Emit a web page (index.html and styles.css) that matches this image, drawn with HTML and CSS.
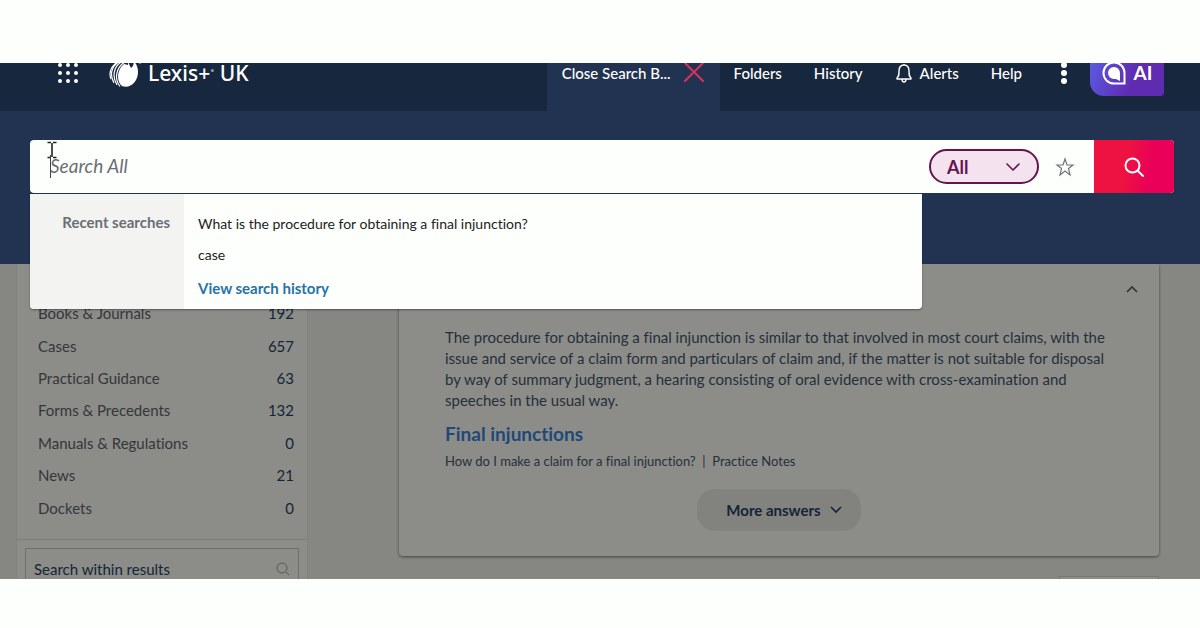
FILE: index.html
```html
<!DOCTYPE html>
<html lang="en">
<head>
  <meta charset="UTF-8" />
  <meta name="viewport" content="width=device-width, initial-scale=1.0"/>
  <title>Lexis+ UK</title>
  <link rel="stylesheet" href="styles.css">
</head>
<body>

  <div class="app">

    <!-- Top bar -->
    <header class="topbar">
      <button class="icon-btn apps-btn" aria-label="Apps">
        <svg width="22" height="22" viewBox="0 0 22 22" fill="#fff">
          <circle cx="3" cy="3" r="2"/><circle cx="11" cy="3" r="2"/><circle cx="19" cy="3" r="2"/>
          <circle cx="3" cy="11" r="2"/><circle cx="11" cy="11" r="2"/><circle cx="19" cy="11" r="2"/>
          <circle cx="3" cy="19" r="2"/><circle cx="11" cy="19" r="2"/><circle cx="19" cy="19" r="2"/>
        </svg>
      </button>
      <a class="brand" href="#">
        <svg width="32" height="30" viewBox="0 0 32 30" fill="none">
          <path d="M15 6C8 11 7 24 13 28C21 31 29 24 29 14C29 9 27 5 25 4L24 8L22 10L19 4L19 7Z" fill="#fff"/>
          <g stroke="#fff" stroke-width="1.200">
            <path d="M16 4C7 9 5 21 11 28.500"/>
            <path d="M14 3C4 8 3 19 8 27"/>
            <path d="M11 3C1 9 1 18 5 25"/>
            <path d="M7 5C0 11 0 16 2 21"/>
          </g>
          <circle cx="31" cy="5" r="1" fill="#8fa3b5"/>
        </svg>
        <span class="brand-name">Lexis+<sup>&bull;</sup> UK</span>
      </a>
      <nav class="menu">
        <a class="tab" href="#">Close Search B...
          <svg width="22" height="22" viewBox="0 0 22 22" stroke="#dc3158" stroke-width="2" stroke-linecap="round"><path d="M2 1L20 19M20 1L2 19"/></svg>
        </a>
        <a class="link" href="#">Folders</a>
        <a class="link" href="#">History</a>
        <a class="link" href="#">
          <svg width="18" height="20" viewBox="0 0 18 20" fill="none" stroke="#fff" stroke-width="1.400" stroke-linejoin="round"><path d="M9 2V1M2 15C4 13 4 12 4 8C4 4 6 2 9 2S14 4 14 8C14 12 14 13 16 15V16H2Z"/><path d="M7 16C7 20 11 20 11 16"/></svg>
          Alerts
        </a>
        <a class="link" href="#">Help</a>
      </nav>
      <button class="icon-btn more-btn" aria-label="More">
        <svg width="6" height="22" viewBox="0 0 6 22" fill="#fff"><circle cx="3" cy="3" r="3"/><circle cx="3" cy="11" r="3"/><circle cx="3" cy="19" r="3"/></svg>
      </button>
      <button class="ai-btn">
        <svg width="24" height="24" viewBox="0 0 24 24" fill="none">
          <path d="M12 1.500A10.500 10.500 0 1 0 12 22.500H22.500V12A10.500 10.500 0 0 0 12 1.500Z" stroke="#fff" stroke-width="2"/>
          <path d="M12 6A6 6 0 1 0 12 18H14L18 20V12A6 6 0 0 0 12 6Z" fill="#fff"/>
        </svg>
        AI
      </button>
    </header>

    <!-- Search -->
    <section class="search-area">
      <form class="search-bar">
        <input class="search-input" type="text" placeholder="Search All" aria-label="Search All">
        <div class="scope">
          <select class="scope-select" aria-label="Search scope">
            <option>All</option>
          </select>
          <svg class="scope-arrow" width="16" height="10" viewBox="0 0 16 10" fill="none" stroke="#641450" stroke-width="1.600" stroke-linecap="round" stroke-linejoin="round"><path d="M2 2L8 8L14 2"/></svg>
        </div>
        <button class="star-btn" type="button" aria-label="Favourite">
          <svg width="20" height="20" viewBox="0 0 20 20" fill="none" stroke="#6f7378" stroke-width="1.200"><path d="M10 2L12 8H18L13.500 11.500L15 18L10 14L5 18L6.500 11.500L2 8H8Z"/></svg>
        </button>
        <button class="search-btn" type="button" aria-label="Search">
          <svg width="22" height="22" viewBox="0 0 22 22" fill="none" stroke="#fff" stroke-width="2" stroke-linecap="round"><circle cx="9.500" cy="9.500" r="7"/><path d="M15 15L20 20"/></svg>
        </button>
        <!-- Text caret and mouse pointer -->
        <svg class="pointer" width="12" height="38" viewBox="0 0 12 38" fill="none">
          <path d="M1.500 1.500H5M7 1.500H10.500M6 2V16M1.500 16.500H5M7 16.500H10.500" stroke="#222" stroke-width="1.600"/>
          <path d="M4.500 14V37" stroke="#444"/>
        </svg>
        <div class="suggest">
          <div class="suggest-title">Recent searches</div>
          <div class="suggest-list">
            <a href="#">What is the procedure for obtaining a final injunction?</a>
            <a href="#">case</a>
            <a class="view-history" href="#">View search history</a>
          </div>
        </div>
      </form>
    </section>

    <!-- Results -->
    <main class="content">
      <aside class="sidebar">
        <nav class="categories">
          <a href="#"><span>Books &amp; Journals</span><span class="count">192</span></a>
          <a href="#"><span>Cases</span><span class="count">657</span></a>
          <a href="#"><span>Practical Guidance</span><span class="count">63</span></a>
          <a href="#"><span>Forms &amp; Precedents</span><span class="count">132</span></a>
          <a href="#"><span>Manuals &amp; Regulations</span><span class="count">0</span></a>
          <a href="#"><span>News</span><span class="count">21</span></a>
          <a href="#"><span>Dockets</span><span class="count">0</span></a>
        </nav>
        <div class="within">
          <input class="within-input" type="text" placeholder="Search within results" aria-label="Search within results">
          <svg width="14" height="14" viewBox="0 0 14 14" fill="none" stroke="#555" stroke-width="1"><circle cx="6" cy="6" r="5"/><path d="M10 10L13 13"/></svg>
        </div>
      </aside>

      <div class="results">
        <article class="answer">
          <button class="icon-btn collapse-btn" aria-label="Collapse">
            <svg width="12" height="8" viewBox="0 0 12 8" fill="none" stroke="#333" stroke-width="1.600"><path d="M1 7L6 2L11 7"/></svg>
          </button>
          <p class="answer-text">The procedure for obtaining a final injunction is similar to that involved in most court claims, with the issue and service of a claim form and particulars of claim and, if the matter is not suitable for disposal by way of summary judgment, a hearing consisting of oral evidence with cross-examination and speeches in the usual way.</p>
          <h2 class="answer-title"><a href="#">Final injunctions</a></h2>
          <p class="answer-source">How do I make a claim for a final injunction?&nbsp; |&nbsp; Practice Notes</p>
          <button class="more-answers">More answers
            <svg width="12" height="8" viewBox="0 0 12 8" fill="none" stroke="#142537" stroke-width="1.600"><path d="M1 1L6 6L11 1"/></svg>
          </button>
        </article>
        <div class="sort-box"></div>
      </div>
    </main>

  </div>

</body>
</html>
```
FILE: styles.css
```css
* {
  box-sizing: border-box;
  margin: 0;
  padding: 0;
}

body {
  display: flex;
  flex-direction: column;
  height: 100vh;
  padding: 63px 0 49px;
  font-family: Lato, sans-serif;
  font-size: 15px;
  font-variant-ligatures: none;
  background: #fdfffd;
  color: #142537;
}

a {
  color: inherit;
  text-decoration: none;
}

button, input, select {
  font-family: inherit;
  font-variant-ligatures: none;
  border: none;
  background: none;
}

button {
  cursor: pointer;
}

svg {
  display: block;
  flex-shrink: 0;
}

.app {
  display: flex;
  flex-direction: column;
  flex: 1;
  min-height: 0;
  overflow: hidden;
  background: #868683;
}

/* Top bar */
.topbar {
  display: flex;
  align-items: center;
  flex-shrink: 0;
  height: 76px;
  margin-top: -28px;
  padding: 0 36px 0 57px;
  background: #17283e;
  color: #fff;
}

.brand {
  display: flex;
  align-items: center;
  gap: 7px;
  margin-left: 30px;
}

.brand-name {
  font-family: "Noto Sans", sans-serif;
  font-size: 21px;
  font-weight: 500;
  line-height: 20px;
}

.brand-name sup {
  font-size: 11px;
  line-height: 1;
  vertical-align: 6px;
  color: #8fa3b5;
}

.menu {
  display: flex;
  align-items: center;
  align-self: stretch;
  margin-left: auto;
  font-weight: 500;
}

.tab {
  display: flex;
  align-items: center;
  align-self: stretch;
  gap: 12px;
  padding: 0 15px;
  background: #213351;
}

.link {
  display: flex;
  align-items: center;
  gap: 7px;
  padding: 0 14px;
}

.link + .link {
  margin-left: 4px;
}

.more-btn {
  margin: 0 23px 0 25px;
}

.ai-btn {
  display: flex;
  align-items: center;
  justify-content: center;
  gap: 8px;
  width: 74px;
  height: 46px;
  border-radius: 4px 4px 4px 14px;
  background: linear-gradient(110deg, #5b5ee6, #5f2bb0 60%);
  color: #fff;
  font-size: 19px;
  font-weight: 700;
  line-height: 20px;
}

/* Search */
.search-area {
  flex-shrink: 0;
  padding: 29px 26px 71px 30px;
  background: #213351;
}

.search-bar {
  position: relative;
  z-index: 1;
  display: flex;
  align-items: center;
  height: 53px;
  border-radius: 4px;
  background: #fdfffd;
}

.search-input {
  flex: 1;
  min-width: 0;
  height: 100%;
  padding: 0 20px 2px;
  font-size: 19px;
  outline: none;
}

.search-input::placeholder {
  color: #6b6f74;
  font-style: italic;
}

.scope {
  position: relative;
}

.scope-select {
  display: block;
  width: 110px;
  height: 35px;
  padding: 0 16px;
  appearance: none;
  border: 2px solid #641450;
  border-radius: 18px;
  background: #f4e2ee;
  color: #641450;
  font-size: 18px;
  font-weight: 700;
}

.scope-arrow {
  position: absolute;
  top: 13px;
  right: 18px;
  pointer-events: none;
}

.star-btn {
  margin: 0 19px 0 16px;
}

.search-btn {
  display: flex;
  align-items: center;
  justify-content: center;
  width: 80px;
  height: 100%;
  border-radius: 0 4px 4px 0;
  background: linear-gradient(100deg, #ee1240 40%, #ea0058 70%);
}

.pointer {
  position: absolute;
  top: 1px;
  left: 16px;
}

.suggest {
  position: absolute;
  top: 54px;
  left: 0;
  display: flex;
  width: 78%;
  border-radius: 0 0 4px 4px;
  background: #fdfffd;
  box-shadow: 0 1px 2px rgba(0, 0, 0, 0.4);
  overflow: hidden;
}

.suggest-title {
  width: 154px;
  padding: 19px 14px;
  background: #f3f3f2;
  color: #6b6f74;
  font-weight: 700;
  text-align: right;
}

.suggest-list {
  display: flex;
  flex-direction: column;
  gap: 12px;
  padding: 20px 14px 11px;
  color: #222;
  font-size: 14px;
  line-height: 19px;
}

.suggest-list .view-history {
  margin-top: 3px;
  color: #2873a5;
  font-size: 15px;
  font-weight: 700;
}

/* Results */
.content {
  display: flex;
  align-items: flex-start;
  gap: 91px;
  padding: 0 41px 0 16px;
}

.sidebar {
  flex-shrink: 0;
  width: 292px;
  padding-top: 33px;
  border: 1px solid #82827f;
  border-top: none;
  background: #8c8c89;
}

.categories {
  display: grid;
  grid-auto-rows: 1fr;
  height: 243px;
  padding: 0 13px 15px 21px;
  border-bottom: 1px solid #7d7d7a;
  color: #343739;
}

.categories a {
  display: flex;
  align-items: center;
  justify-content: space-between;
}

.count {
  color: #142537;
}

.within {
  display: flex;
  align-items: center;
  height: 42px;
  margin: 8px;
  padding: 0 8px;
  border: 1px solid #6f6f6d;
}

.within-input {
  flex: 1;
  min-width: 0;
  font-size: 15px;
}

.within-input::placeholder {
  color: #142537;
}

.results {
  flex: 1;
  min-width: 0;
}

.answer {
  display: flex;
  flex-direction: column;
  padding: 21px 46px 25px;
  border-radius: 0 0 4px 4px;
  background: #8c8c89;
  box-shadow: 0 1px 3px rgba(0, 0, 0, 0.5);
}

.collapse-btn {
  align-self: flex-end;
  margin: 0 -25px 34px 0;
}

.answer-text {
  color: #26303a;
  line-height: 21px;
}

.answer-title {
  margin-top: 10px;
  color: #1f4976;
  font-size: 19px;
  font-weight: 700;
  line-height: 26px;
}

.answer-source {
  margin-top: 5px;
  color: #26303a;
  font-size: 13px;
  line-height: 18px;
}

.more-answers {
  display: flex;
  align-items: center;
  align-self: center;
  gap: 9px;
  height: 42px;
  margin-top: 19px;
  padding: 0 19px 0 29px;
  border-radius: 18px;
  background: #82827f;
  color: #142537;
  font-size: 15px;
  font-weight: 700;
}

.sort-box {
  width: 100px;
  height: 32px;
  margin: 20px 0 0 auto;
  border: 1px solid #767673;
  background: #8c8c89;
}
```
